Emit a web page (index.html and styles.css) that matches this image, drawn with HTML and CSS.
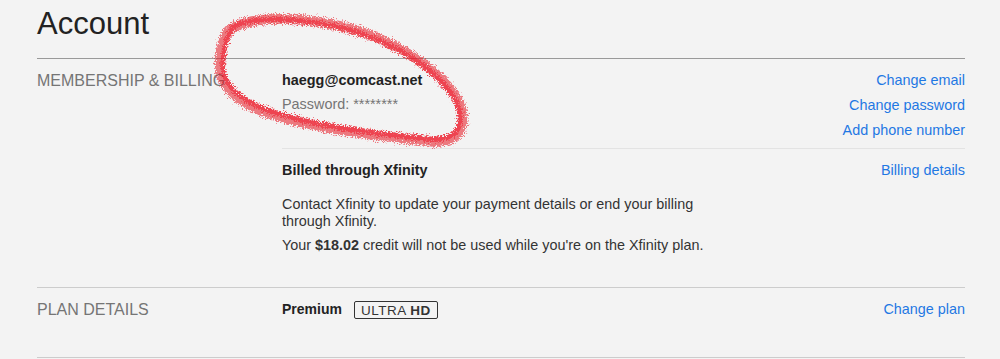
FILE: index.html
```
<!DOCTYPE html>
<html lang="en">
<head>
    <meta charset="UTF-8">
    <meta name="viewport" content="width=device-width, initial-scale=1.0">
    <title>Account</title>
    <link rel="stylesheet" href="styles.css">
</head>
<body>
    <div class="page">
        <h1 class="page-title">Account</h1>

        <!-- Membership & billing -->
        <section class="account-section first">
            <h2 class="section-label">MEMBERSHIP &amp; BILLING</h2>
            <div class="section-content">
                <div class="section-row">
                    <div class="row-info">
                        <div class="account-email">haegg@comcast.net</div>
                        <div class="account-password">Password: ********</div>
                    </div>
                    <div class="row-links">
                        <a href="#">Change email</a>
                        <a href="#">Change password</a>
                        <a href="#">Add phone number</a>
                    </div>
                </div>
                <div class="section-row billing-row">
                    <div class="row-info">
                        <div class="billing-title">Billed through Xfinity</div>
                        <p class="billing-text">Contact Xfinity to update your payment details or end your billing through Xfinity.</p>
                        <p class="billing-text credit">Your <b>$18.02</b> credit will not be used while you're on the Xfinity plan.</p>
                    </div>
                    <div class="row-links">
                        <a href="#">Billing details</a>
                    </div>
                </div>
            </div>
        </section>

        <!-- Plan details -->
        <section class="account-section plan">
            <h2 class="section-label">PLAN DETAILS</h2>
            <div class="section-content">
                <div class="section-row">
                    <div class="row-info plan-name">
                        <b>Premium</b>
                        <span class="uhd-badge">ULTRA <b>HD</b></span>
                    </div>
                    <div class="row-links">
                        <a href="#">Change plan</a>
                    </div>
                </div>
            </div>
        </section>
    </div>

    <!-- red marker circle drawn over the email -->
    <svg class="scribble" width="1000" height="359" viewBox="0 0 1000 359">
        <defs>
            <filter id="rough" x="-10%" y="-20%" width="120%" height="140%">
                <feTurbulence type="fractalNoise" baseFrequency="0.9" numOctaves="3" seed="7" result="noise"/>
                <feDisplacementMap in="SourceGraphic" in2="noise" scale="9" xChannelSelector="R" yChannelSelector="G" result="moved"/>
                <feGaussianBlur in="moved" stdDeviation="0.6"/>
            </filter>
        </defs>
        <g filter="url(#rough)" fill="none" stroke-linecap="round">
            <path d="M232,28 C262,12 332,18 382,40 C422,58 456,86 462,112 C466,136 450,146 420,140 C370,135 300,126 260,110 C230,98 218,80 220,60 C221,45 225,33 232,28 Z"
                  stroke="#e8101e" stroke-opacity="0.55" stroke-width="10"/>
            <path d="M234,26 C264,13 334,20 383,42 C423,60 455,88 460,113 C463,134 448,143 418,138 C368,133 302,124 262,108 C233,96 221,79 223,60 C224,46 228,34 234,26 Z"
                  stroke="#f01020" stroke-opacity="0.5" stroke-width="5"/>
        </g>
    </svg>
</body>
</html>
```
FILE: styles.css
```
body {
    font-family: "Liberation Sans", Arial, sans-serif;
    background-color: #f3f3f3;
    color: #222;
    margin: 0;
    padding: 0;
}
.page {
    width: 928px;
    padding: 6px 0 0 37px;
}
.page-title {
    font-size: 31px;
    font-weight: normal;
    line-height: 36px;
    margin: 0 0 16px 0;
}
.account-section {
    display: grid;
    grid-template-columns: 245px 1fr;
    border-top: 1px solid #ccc;
    padding: 9px 0 33px 0;
}
.account-section.first {
    border-top-color: #999;
}
.account-section.plan {
    padding-bottom: 35px;
    border-bottom: 1px solid #ccc;
}
.section-label {
    font-size: 16px;
    font-weight: normal;
    color: #757575;
    line-height: 25px;
    margin: 0;
}
.section-row {
    display: flex;
    justify-content: space-between;
    align-items: flex-start;
    font-size: 14.4px;
}
.billing-row {
    border-top: 1px solid #e3e3e3;
    margin-top: 5px;
    padding-top: 9px;
}
.row-links {
    display: flex;
    flex-direction: column;
    align-items: flex-end;
    line-height: 25px;
}
.row-links a {
    color: #1f78e3;
    text-decoration: none;
}
.account-email {
    font-weight: bold;
    line-height: 24px;
}
.account-password {
    color: #757575;
    line-height: 24px;
}
.billing-title {
    font-weight: bold;
    line-height: 25px;
}
.billing-text {
    width: 440px;
    color: #333;
    line-height: 17px;
    margin: 13px 0 0 0;
}
.billing-text.credit {
    margin-top: 7px;
}
.plan-name {
    display: flex;
    align-items: center;
    line-height: 25px;
    font-size: 14px;
}
.uhd-badge {
    margin-left: 12px;
    border: 1px solid #333;
    border-radius: 2px;
    padding: 1px 6px 0 6px;
    font-size: 13.5px;
    line-height: 15px;
    letter-spacing: 0.5px;
    color: #333;
}
.scribble {
    position: absolute;
    top: 0;
    left: 0;
    pointer-events: none;
}
```
